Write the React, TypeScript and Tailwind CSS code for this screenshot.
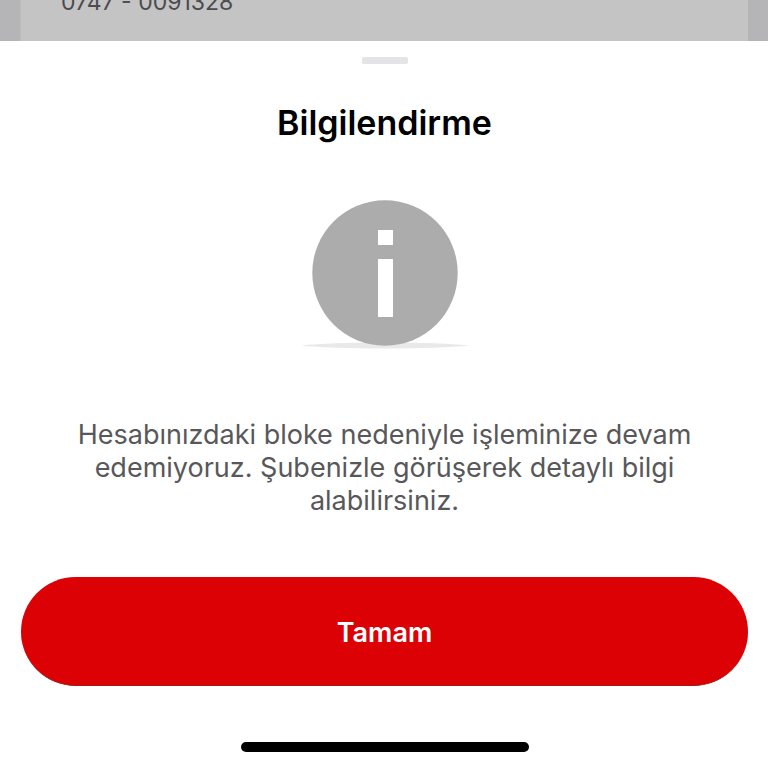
function InfoIcon() {
  return (
    <svg width="172" height="150" viewBox="0 0 172 150" aria-hidden="true">
      <path d="M2 145.5Q30 142.5 86 142.5T170 145.5Q142 148.5 86 148.5T2 145.5Z" fill="#e9e9e9" />
      <circle cx="86" cy="73" r="72.7" fill="#acacad" />
      <rect x="79" y="30" width="15" height="15" fill="#fff" />
      <rect x="79" y="59" width="15" height="58" fill="#fff" />
    </svg>
  );
}

function AccountCard() {
  return (
    <div className="flex h-[41px] items-end overflow-hidden bg-[#b5b5b8] px-5">
      <div className="flex-1 border-l border-[#bdbdbe] bg-[#c4c4c4] px-10 pb-6">
        <p className="text-[23px] leading-[30px] text-[#4c4c4f]">0747 - 0091328</p>
      </div>
    </div>
  );
}

export default function App() {
  return (
    <div className="flex min-h-screen flex-col bg-white font-['Inter',sans-serif]">
      <AccountCard />

      {/* Bottom sheet */}
      <section
        role="dialog"
        aria-labelledby="sheet-title"
        className="flex flex-1 flex-col items-center pt-4 pr-5 pl-[21px]"
      >
        <div className="h-[7px] w-[46px] rounded-xs bg-[#e4e4e6]" />
        <h1 id="sheet-title" className="mt-[37px] text-[34px] leading-[44px] font-semibold text-black">
          Bilgilendirme
        </h1>

        <div className="mt-[55px]">
          <InfoIcon />
        </div>

        <p className="mt-[68px] max-w-[640px] text-center text-[27px] leading-[33px] text-[#58585b]">
          Hesabınızdaki bloke nedeniyle işleminize devam edemiyoruz. Şubenizle görüşerek detaylı bilgi
          alabilirsiniz.
        </p>

        <button
          type="button"
          className="mt-[60px] h-[109px] w-full rounded-full border-b border-[#a01c1c] bg-[#db0105] pt-1 text-[27px] font-semibold text-white"
        >
          Tamam
        </button>

        <div className="mt-14 h-[10px] w-72 rounded-full bg-black" />
      </section>
    </div>
  );
}
